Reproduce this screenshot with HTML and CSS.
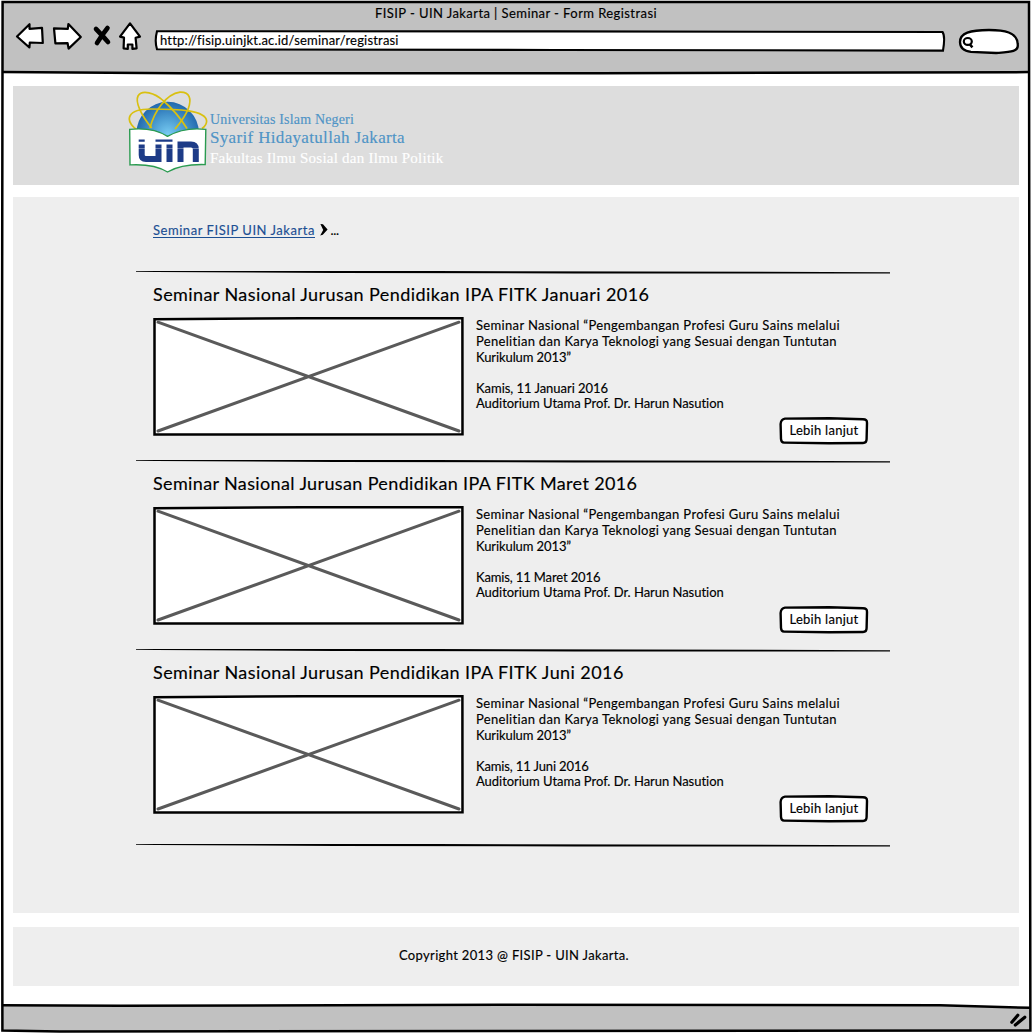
FILE: index.html
```html
<!DOCTYPE html>
<html lang="id">
<head>
<meta charset="utf-8">
<title>FISIP - UIN Jakarta | Seminar - Form Registrasi</title>
<link rel="stylesheet" href="styles.css">
</head>
<body>
<svg class="defs" aria-hidden="true">
  <symbol id="rule" viewBox="0 0 754 5" preserveAspectRatio="none">
    <path d="M0 1.1 L300 1 L754 2.2 V3.6 L440 3.5 L200 3 L20 2.1 L0 1.8Z"/>
  </symbol>
  <symbol id="picture" viewBox="0 0 311 119">
    <path d="M1.5 2.2 L150 1.3 L309.4 1.3 L309.5 117.3 L1.5 117.6Z" fill="#fff" stroke="#000" stroke-width="2.5"/>
    <path d="M5 5.2 L306 114 M306 5.2 L5 114" stroke="#5a5a5a" stroke-width="3" stroke-linecap="round"/>
  </symbol>
  <symbol id="button" viewBox="0 0 90 28">
    <path d="M6 1.6 L50 1.3 L84 2.2 Q88.2 2.3 88 6 L87.6 22 Q87.6 26 84 26 L50 26.2 L5 25.6 Q2.2 25.6 2 22 L1.6 7 Q2 2.2 6 1.6Z" fill="#fff" stroke="#000" stroke-width="2.4"/>
  </symbol>
</svg>
<div class="window">
  <header class="toolbar">
    <div class="window-title"><span>FISIP - UIN Jakarta | Seminar - Form Registrasi</span></div>
    <div class="controls">
      <svg class="nav" width="140" height="34" viewBox="0 0 140 34">
        <g fill="#fff" stroke="#000" stroke-width="2.2" stroke-linejoin="round">
          <path d="M3 15.5 L15.5 3.2 V7.8 L28 6.8 L28.8 22 L15.8 21.5 L15.4 26.5Z"/>
          <path d="M40 7.4 L53.8 7.8 L54.4 3 L66.8 16 L54.6 27.6 L53.6 22.2 L41.4 22.4Z"/>
          <path d="M116 2.4 L126 15.6 L121.6 16.8 L122.6 27.4 L118.4 27.8 V23.5 H113.8 V28 L109.6 27.4 L110 16.6 L106 15.6Z"/>
        </g>
        <path d="M82 8 Q86 12 94 21 M93.5 7 Q88 14 83 22" stroke="#000" stroke-width="4.6" stroke-linecap="round" fill="none"/>
      </svg>
      <div class="address">
        <svg width="792" height="24" viewBox="0 0 792 24"><path d="M3 2.2 L400 2.4 L788.5 3 Q791.5 7 789 21.6 L400 21 L3 20.3 Q.4 12 3 2.2Z" fill="#fff" stroke="#000" stroke-width="2.1"/></svg>
        <span>http://fisip.uinjkt.ac.id/seminar/registrasi</span>
      </div>
      <svg class="search" width="62" height="27" viewBox="0 0 62 27">
        <path d="M2 14 C2 5 12 2 31 2 C46 2 59 4 59.7 16 C61 24 52 24 38 25 L13 23.8 C6 23 2 20 2 14Z" fill="#fff" stroke="#000" stroke-width="2.3"/>
        <ellipse cx="9.8" cy="13.4" rx="4" ry="3.4" fill="none" stroke="#000" stroke-width="2.2"/>
        <path d="M11.6 16 L14.4 19.4" stroke="#000" stroke-width="2.5"/>
      </svg>
    </div>
  </header>

  <div class="masthead">
    <svg class="emblem" width="82" height="86" viewBox="0 0 82 86">
      <defs><radialGradient id="globe" gradientUnits="userSpaceOnUse" cx="41" cy="44" r="33"><stop offset="0" stop-color="#78cbf2"/><stop offset=".5" stop-color="#4a9ad0"/><stop offset="1" stop-color="#1f66ac"/></radialGradient></defs>
      <circle cx="40.7" cy="43" r="31.2" fill="url(#globe)"/>
      <g fill="none" stroke="#d9c010" stroke-width="1.7">
        <path d="M10 40 C-3 30 0 19 24 19 C50 19 79 20 79.6 31 Q79.7 35 75 38.5"/>
        <path d="M24.7 38 C14 25 8 12 11 6 C15 -1 28 3 36 10.5 C46 19 54 29 60 38.5"/>
        <path d="M23 38 C27 22 39 4 53 2.2 C63 1.8 64.5 9 61.5 18 C59 25 54 32 48 39"/>
      </g>
      <path d="M2.7 39.4 C20 37.6 32 41 40.5 46.3 C50 41 63 37.5 78.8 39.4 L78.2 74.6 C64 74.2 51 75.9 40.5 82 C31 76.1 18 74.1 3 74.9Z" fill="#fff" stroke="#2a9b50" stroke-width="1.4"/>
      <g fill="none" stroke="#1d3b87" stroke-width="6">
        <path d="M14.7 54.5 V65 Q14.7 69 19 69 H31.5 V54.5"/>
        <path d="M42.5 54.5 V72"/>
        <path d="M53.5 72 V54.4 H64 Q68.8 54.4 68.8 59 V72"/>
      </g>
      <path d="M28.5 50.6 H45.5 M11.7 50.6 H17.7" stroke="#1d3b87" stroke-width="2.2"/>
      <path d="M10 58.5 H74" stroke="#fff" stroke-width=".6" opacity=".6"/>
    </svg>
    <div class="identity">
      <div class="university">Universitas Islam Negeri</div>
      <div class="campus">Syarif Hidayatullah Jakarta</div>
      <div class="faculty">Fakultas Ilmu Sosial dan Ilmu Politik</div>
    </div>
  </div>

  <main class="content">
    <nav class="breadcrumb">
      <a href="#">Seminar FISIP UIN Jakarta</a>
      <svg width="8" height="12" viewBox="0 0 8 12"><path d="M.4 0 L3 .3 L7.6 5.6 L2.8 10.8 L.2 11.5 L3.2 6Z"/></svg>
      <span>...</span>
    </nav>

    <article class="seminar">
      <svg class="rule"><use href="#rule"/></svg>
      <h2>Seminar Nasional Jurusan Pendidikan IPA FITK Januari 2016</h2>
      <div class="detail">
        <svg class="picture"><use href="#picture"/></svg>
        <div class="info">
          <p class="theme"><span class="first">Seminar Nasional “Pengembangan Profesi Guru Sains melalui</span><span class="second">Penelitian dan Karya Teknologi yang Sesuai dengan Tuntutan</span><span class="third">Kurikulum 2013”</span></p>
          <p class="schedule"><span>Kamis, 11 Januari 2016</span><span>Auditorium Utama Prof. Dr. Harun Nasution</span></p>
          <a class="more" href="#"><svg><use href="#button"/></svg><span>Lebih lanjut</span></a>
        </div>
      </div>
    </article>

    <article class="seminar">
      <svg class="rule"><use href="#rule"/></svg>
      <h2 class="maret">Seminar Nasional Jurusan Pendidikan IPA FITK Maret 2016</h2>
      <div class="detail">
        <svg class="picture"><use href="#picture"/></svg>
        <div class="info">
          <p class="theme"><span class="first">Seminar Nasional “Pengembangan Profesi Guru Sains melalui</span><span class="second">Penelitian dan Karya Teknologi yang Sesuai dengan Tuntutan</span><span class="third">Kurikulum 2013”</span></p>
          <p class="schedule"><span class="narrow">Kamis, 11 Maret 2016</span><span>Auditorium Utama Prof. Dr. Harun Nasution</span></p>
          <a class="more" href="#"><svg><use href="#button"/></svg><span>Lebih lanjut</span></a>
        </div>
      </div>
    </article>

    <article class="seminar last">
      <svg class="rule"><use href="#rule"/></svg>
      <h2>Seminar Nasional Jurusan Pendidikan IPA FITK Juni 2016</h2>
      <div class="detail">
        <svg class="picture"><use href="#picture"/></svg>
        <div class="info">
          <p class="theme"><span class="first">Seminar Nasional “Pengembangan Profesi Guru Sains melalui</span><span class="second">Penelitian dan Karya Teknologi yang Sesuai dengan Tuntutan</span><span class="third">Kurikulum 2013”</span></p>
          <p class="schedule"><span class="narrow">Kamis, 11 Juni 2016</span><span>Auditorium Utama Prof. Dr. Harun Nasution</span></p>
          <a class="more" href="#"><svg><use href="#button"/></svg><span>Lebih lanjut</span></a>
        </div>
      </div>
    </article>
    <svg class="rule"><use href="#rule"/></svg>
  </main>

  <footer class="copyright"><span>Copyright 2013 @ FISIP - UIN Jakarta.</span></footer>

  <svg class="frame" width="1032" height="1033" viewBox="0 0 1032 1033">
    <path d="M2 1005 V1031 H1030 V1007.6 L940 1005.8Z" fill="#c1c1c1"/>
    <g fill="none" stroke="#000" stroke-width="2.5">
      <path d="M2.6 2 L1029 2 L1029.6 500 L1030.4 1030.4 L500 1031 L60 1031.4 L2.4 1030.6 L1.8 500Z"/>
      <path d="M2 72.1 L180 73.2 L600 73.2 L1029 72.1"/>
      <path d="M2 1005.2 L120 1005.8 L500 1004.8 L940 1005.2 L1030 1007.8"/>
    </g>
    <path d="M1011.8 1022.3 L1017.8 1015.3 M1015.3 1025 L1024.8 1017.3" stroke="#000" stroke-width="3.2" stroke-linecap="round"/>
  </svg>
</div>
</body>
</html>
```
FILE: styles.css
```css
* { box-sizing: border-box; }

body {
  margin: 0;
  background: #fff;
  color: #000;
  font: 13px/16px Lato, "Open Sans", sans-serif;
  -webkit-text-stroke: 0.15px currentColor;
}

h2, p { margin: 0; }
svg { display: block; flex: none; }
a { color: inherit; text-decoration: none; }
.defs { position: absolute; width: 0; height: 0; }

.window {
  position: relative;
  display: flex;
  flex-direction: column;
  width: 1032px;
  height: 1033px;
  padding: 2px 2px 0;
  overflow: hidden;
}

.frame {
  position: absolute;
  inset: 0;
  pointer-events: none;
}

/* Browser chrome */
.toolbar {
  height: 71px;
  padding-top: 3px;
  background: #c1c1c1;
}

.window-title {
  text-align: center;
  letter-spacing: 0.424px;
  white-space: nowrap;
}

.controls { display: flex; }
.nav { margin: 0 0 0 12px; }

.address {
  display: grid;
  align-items: center;
  width: 792px;
  height: 24px;
  margin: 8px 0 0;
}
.address > * { grid-area: 1 / 1; }
.address span {
  z-index: 1;
  padding-left: 6px;
  margin-top: -3px;
  letter-spacing: 0.193px;
}
.search { margin: 7px 0 0 12px; }

/* Page header */
.masthead {
  display: flex;
  height: 99px;
  margin: 13px 11px 0;
  padding: 4px 0 0 114px;
  background: #ddd;
}
.identity {
  padding-top: 20px;
  margin-left: 1px;
  font-family: "Liberation Serif", serif;
  color: #4f94c6;
  white-space: nowrap;
}
.university { font-size: 14px; line-height: 19px; letter-spacing: 0.168px; }
.campus { font-size: 17px; line-height: 17px; letter-spacing: 0.333px; }
.faculty { font-size: 15px; line-height: 25px; letter-spacing: 0.24px; color: #fff; }

/* Seminar list */
.content {
  height: 716px;
  margin: 12px 11px 0;
  padding: 25px 129px 0 123px;
  background: #eee;
}
.breadcrumb {
  display: flex;
  gap: 5px;
  height: 48px;
  padding-left: 17px;
}
.breadcrumb a {
  height: 16px;
  color: #1c4f93;
  letter-spacing: 0.546px;
  border-bottom: 1px solid #1c4f93;
  margin-right: -.5px;
}
.breadcrumb svg { margin-top: 2px; }
.breadcrumb span { margin-left: -2px; letter-spacing: -.3px; }

.rule { width: 754px; height: 5px; }
.seminar { height: 189px; }
.seminar.last { height: 195px; }
.seminar h2 {
  margin: 7px 0 0 17px;
  font-size: 18px;
  font-weight: 400;
  line-height: 24px;
  letter-spacing: 0.42px;
  white-space: nowrap;
}
.seminar h2.maret { letter-spacing: 0.365px; }
.detail {
  display: flex;
  gap: 12px;
  padding: 11px 21px 0 17px;
}
.picture { width: 311px; height: 119px; }
.info {
  display: flex;
  flex: 1;
  flex-direction: column;
}
.info p span { display: block; white-space: nowrap; }
.first { letter-spacing: 0.336px; }
.second { letter-spacing: 0.309px; }
.third { letter-spacing: -0.099px; }
.schedule {
  margin-top: 16px;
  line-height: 15px;
  letter-spacing: -0.033px;
}
.schedule .narrow { letter-spacing: -0.13px; }
.more {
  display: grid;
  place-items: center;
  align-self: flex-end;
  width: 90px;
  height: 28px;
  margin-top: 6px;
  letter-spacing: 0.262px;
}
.more > * { grid-area: 1 / 1; }
.more svg { width: 90px; height: 28px; }
.more span { z-index: 1; margin-top: -3px; }

/* Page footer */
.copyright {
  height: 59px;
  margin: 14px 11px 0;
  padding: 20px 4px 0 0;
  background: #eee;
  text-align: center;
  letter-spacing: 0.336px;
}
```
